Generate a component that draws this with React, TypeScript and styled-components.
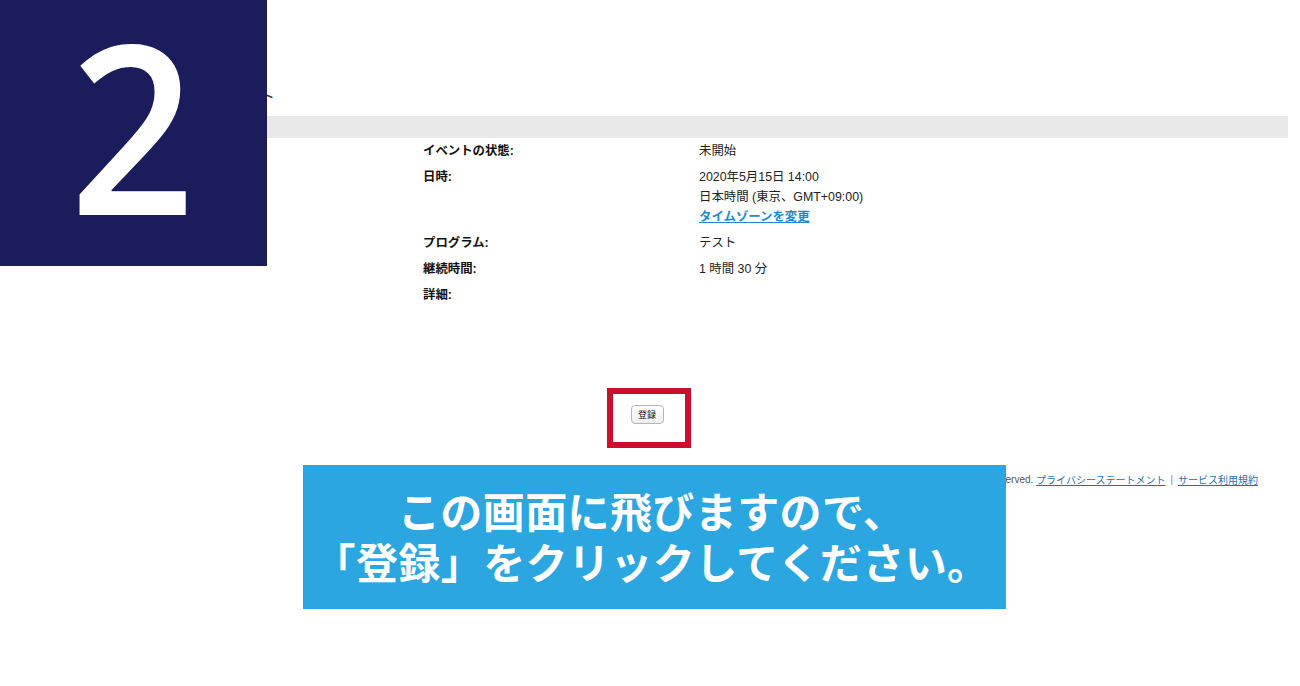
import React from 'react'
import styled, { createGlobalStyle } from 'styled-components'

const GlobalStyle = createGlobalStyle`
  html, body {
    margin: 0;
    padding: 0;
    background: #fff;
  }
  body {
    font-family: 'Liberation Sans', 'Noto Sans CJK JP', sans-serif;
    color: #222;
  }
`

interface Row {
  label: string
  lines: { text: string; link?: boolean }[]
}

const rows: Row[] = [
  { label: 'イベントの状態:', lines: [{ text: '未開始' }] },
  {
    label: '日時:',
    lines: [
      { text: '2020年5月15日 14:00' },
      { text: '日本時間 (東京、GMT+09:00)' },
      { text: 'タイムゾーンを変更', link: true }
    ]
  },
  { label: 'プログラム:', lines: [{ text: 'テスト' }] },
  { label: '継続時間:', lines: [{ text: '1 時間 30 分' }] },
  { label: '詳細:', lines: [] }
]

const App: React.FC = () => {
  return (
    <Page>
      <GlobalStyle />
      <Header>
        <Title>イベント</Title>
      </Header>
      <GreyBar />
      <Details>
        {rows.map(row => (
          <React.Fragment key={row.label}>
            <Label>{row.label}</Label>
            <Value>
              {row.lines.map(line =>
                line.link ? (
                  <Link key={line.text}>{line.text}</Link>
                ) : (
                  <div key={line.text}>{line.text}</div>
                )
              )}
            </Value>
          </React.Fragment>
        ))}
      </Details>
      <Actions>
        <RegisterButton>登録</RegisterButton>
      </Actions>
      <Footer>
        © 2020 Cisco and/or its affiliates. All rights reserved.{' '}
        <FooterLink>プライバシーステートメント</FooterLink>
        <Sep>|</Sep>
        <FooterLink>サービス利用規約</FooterLink>
      </Footer>

      <StepBadge>
        <StepNumber>2</StepNumber>
      </StepBadge>
      <Highlight />
      <Banner>
        <BannerLine>この画面に飛びますので、</BannerLine>
        <BannerLine>「登録」をクリックしてください。</BannerLine>
      </Banner>
    </Page>
  )
}

export default App

const Page = styled.div`
  position: relative;
  width: 1300px;
  height: 686px;
  overflow: hidden;
`

const Header = styled.div`
  height: 116px;
  display: flex;
  align-items: flex-end;
  padding-left: 211px;
  box-sizing: border-box;
  padding-bottom: 9px;
`

const Title = styled.div`
  font-size: 16px;
  color: #333;
`

const GreyBar = styled.div`
  height: 22px;
  margin-right: 12px;
  background: #e9e9e9;
`

const Details = styled.div`
  display: grid;
  grid-template-columns: 276px 1fr;
  row-gap: 6px;
  padding: 3px 0 0 423px;
  font-size: 12.4px;
  line-height: 20px;
`

const Label = styled.div`
  font-weight: bold;
  color: #111;
`

const Value = styled.div`
  color: #222;
`

const Link = styled.div`
  color: #1f8ad2;
  font-weight: bold;
  text-decoration: underline;
`

const Actions = styled.div`
  display: flex;
  justify-content: center;
  padding: 100px 6px 0 0;
`

const RegisterButton = styled.button`
  width: 33px;
  height: 19px;
  padding: 0;
  font-family: 'Noto Sans CJK JP', sans-serif;
  font-size: 9px;
  color: #111;
  background: linear-gradient(#fff, #f0f0f0);
  border: 1px solid #b5b5b5;
  border-radius: 4px;
`

const Footer = styled.div`
  display: flex;
  justify-content: flex-end;
  align-items: center;
  padding: 48px 42px 0 0;
  font-size: 10px;
  color: #555;
  white-space: pre;
`

const FooterLink = styled.span`
  color: #1f6fb4;
  text-decoration: underline;
`

const Sep = styled.span`
  color: #888;
  margin: 0 5px;
`

const StepBadge = styled.div`
  position: absolute;
  left: 0;
  top: 0;
  width: 267px;
  height: 266px;
  background: #1a1c5c;
  display: flex;
  align-items: center;
  justify-content: center;
  padding: 0 3px 18px 0;
  box-sizing: border-box;
`

const StepNumber = styled.div`
  color: #fff;
  font-family: 'Open Sans', sans-serif;
  font-weight: 600;
  font-size: 236px;
  line-height: 236px;
  transform: scaleX(0.93);
`

const Highlight = styled.div`
  position: absolute;
  left: 607px;
  top: 388px;
  width: 84px;
  height: 60px;
  border: 6px solid #c8102e;
  box-sizing: border-box;
`

const Banner = styled.div`
  position: absolute;
  left: 303px;
  top: 465px;
  width: 703px;
  height: 144px;
  background: #2ba6e0;
  display: flex;
  flex-direction: column;
  align-items: center;
  justify-content: center;
  padding: 0 6px 4px 0;
  box-sizing: border-box;
`

const BannerLine = styled.div`
  font-family: 'Noto Sans CJK JP', sans-serif;
  font-weight: bold;
  font-size: 42px;
  letter-spacing: 0.4px;
  line-height: 51px;
  color: #fff;
`
